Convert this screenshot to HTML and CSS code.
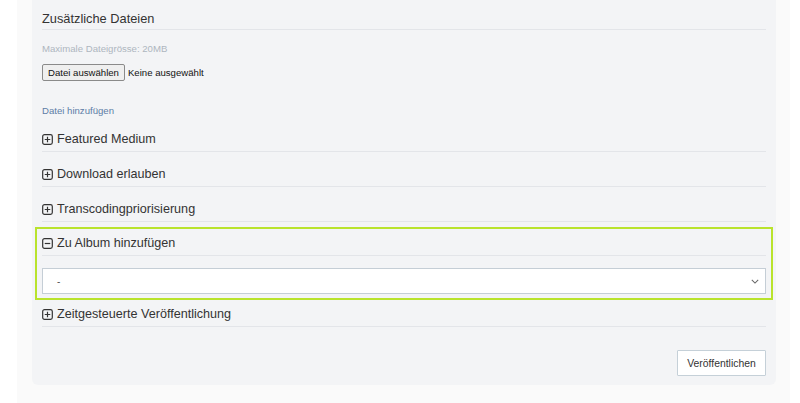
FILE: index.html
```html
<!DOCTYPE html>
<html lang="de">
<head>
<meta charset="utf-8">
<title>Zusätzliche Dateien</title>
<link rel="stylesheet" href="styles.css">
</head>
<body>
<div class="page">
  <div class="card">
    <h2 class="title">Zusätzliche Dateien</h2>
    <p class="hint">Maximale Dateigrösse: 20MB</p>
    <div class="file-row">
      <button class="file-btn" type="button">Datei auswählen</button>
      <span class="file-none">Keine ausgewählt</span>
    </div>
    <a class="add-link">Datei hinzufügen</a>

    <div class="row">
      <svg class="ico" viewBox="0 0 12 12"><rect x="0.75" y="0.75" width="10.5" height="10.5" rx="2"/><path d="M3 6h6M6 3v6"/></svg>
      <span>Featured Medium</span>
    </div>
    <div class="row">
      <svg class="ico" viewBox="0 0 12 12"><rect x="0.75" y="0.75" width="10.5" height="10.5" rx="2"/><path d="M3 6h6M6 3v6"/></svg>
      <span>Download erlauben</span>
    </div>
    <div class="row">
      <svg class="ico" viewBox="0 0 12 12"><rect x="0.75" y="0.75" width="10.5" height="10.5" rx="2"/><path d="M3 6h6M6 3v6"/></svg>
      <span>Transcodingpriorisierung</span>
    </div>

    <div class="group">
      <div class="row row-open">
        <svg class="ico" viewBox="0 0 12 12"><rect x="0.75" y="0.75" width="10.5" height="10.5" rx="2"/><path d="M3 6h6"/></svg>
        <span>Zu Album hinzufügen</span>
      </div>
      <div class="select-wrap">
        <div class="select">
          <span class="select-val">-</span>
          <svg class="chev" viewBox="0 0 10 6"><path d="M1 1l4 4 4-4"/></svg>
        </div>
      </div>
    </div>

    <div class="row row-after">
      <svg class="ico" viewBox="0 0 12 12"><rect x="0.75" y="0.75" width="10.5" height="10.5" rx="2"/><path d="M3 6h6M6 3v6"/></svg>
      <span>Zeitgesteuerte Veröffentlichung</span>
    </div>

    <div class="actions">
      <button class="publish" type="button">Veröffentlichen</button>
    </div>
  </div>
</div>
</body>
</html>
```
FILE: styles.css
```css
html, body {
  margin: 0;
  padding: 0;
  background: #ffffff;
  font-family: "Liberation Sans", Arial, sans-serif;
  color: #333333;
}

.page {
  margin: 0 10px 0 17px;
  padding: 0 15px 19px 15px;
  background: #fafafa;
  min-height: 403px;
  box-sizing: border-box;
}

.card {
  width: 744px;
  box-sizing: border-box;
  background: #f3f4f6;
  border-radius: 0 0 6px 6px;
  padding: 8px 10px 9px 10px;
  display: flex;
  flex-direction: column;
}

.title {
  margin: 0;
  font-weight: normal;
  font-size: 12.8px;
  line-height: 21px;
  height: 21px;
  border-bottom: 1px solid #e3e5e9;
}

.hint {
  margin: 12px 0 0 0;
  font-size: 9.6px;
  line-height: 14px;
  color: #aeb6bf;
}

.file-row {
  display: flex;
  align-items: center;
  margin-top: 8px;
  height: 17px;
}

.file-btn {
  font-family: "Liberation Sans", Arial, sans-serif;
  font-size: 9.6px;
  height: 17px;
  padding: 0 5px;
  margin: 0;
  background: #efefef;
  border: 1px solid #8a8a8a;
  border-radius: 2px;
  color: #111;
  line-height: 14px;
}

.file-none {
  font-size: 9.6px;
  margin-left: 3px;
  color: #111;
}

.add-link {
  margin-top: 24px;
  font-size: 9.6px;
  line-height: 12px;
  color: #5d7da6;
}

.row {
  display: flex;
  align-items: center;
  gap: 4px;
  padding: 14px 0 4px 0;
  height: 16px;
  border-bottom: 1px solid #e3e5e9;
  font-size: 12.6px;
  line-height: 16px;
  color: #333;
}

.ico {
  width: 11px;
  height: 11px;
  flex: none;
  fill: none;
  stroke: #333;
  stroke-width: 1.3;
}

.group {
  margin: 5px -7px 0 -7px;
  border: 2px solid #b9e32c;
  padding: 0 5px;
}

.row-open {
  padding-top: 6px;
}

.select-wrap {
  padding: 12px 0 4px 0;
}

.select {
  height: 24px;
  background: #ffffff;
  border: 1px solid #c5ced6;
  display: flex;
  align-items: center;
  justify-content: space-between;
  padding: 0 6px 0 14px;
}

.select-val {
  font-size: 10px;
  color: #555;
}

.chev {
  width: 8px;
  height: 5px;
  fill: none;
  stroke: #666;
  stroke-width: 1.3;
}

.row-after {
  padding-top: 6px;
}

.actions {
  display: flex;
  justify-content: flex-end;
  margin-top: 23px;
}

.publish {
  font-family: "Liberation Sans", Arial, sans-serif;
  font-size: 10.4px;
  color: #333;
  background: #ffffff;
  border: 1px solid #c5d0d8;
  border-radius: 1px;
  height: 26px;
  width: 89px;
  padding: 0;
  margin: 0;
}
```
